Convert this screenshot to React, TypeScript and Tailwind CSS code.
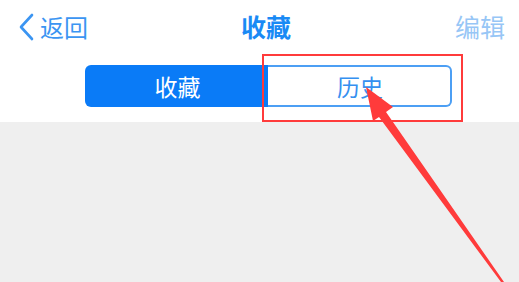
import React from 'react'

const cjk = { fontFamily: '"Noto Sans CJK SC", "Noto Sans", sans-serif' }

function Chevron() {
  return (
    <svg width="16" height="28" viewBox="0 0 16 28" fill="none">
      <path d="M14 2 L3 14 L14 26" stroke="#3b95f2" strokeWidth="2.6" strokeLinecap="round" strokeLinejoin="round" />
    </svg>
  )
}

function Arrow() {
  // tip at (366,88), tail toward (502,282)
  return (
    <svg className="absolute left-0 top-0 pointer-events-none" width="519" height="282" viewBox="0 0 519 282">
      <polygon
        fill="#ff3b3b"
        points="366,87 393,107 386,112 504,282 501,282 379,117 373,121"
      />
    </svg>
  )
}

export default function App() {
  return (
    <div className="relative w-[519px] h-[282px] overflow-hidden bg-[#efefef]" style={cjk}>
      <div className="bg-white h-[122px] flex flex-col">
        <div className="flex items-center h-[52px] pt-[1px]">
          <div className="flex items-center gap-[6px] ml-[18px] text-[#3b95f2] text-[24px] leading-none">
            <Chevron />
            <span>返回</span>
          </div>
          <div className="ml-[153px] text-[25px] font-bold text-[#1a8af5] leading-none">收藏</div>
          <div className="ml-auto mr-[14px] text-[25px] text-[#97c6f6] leading-none">编辑</div>
        </div>
        <div className="flex mt-[13px] ml-[85px] w-[367px] h-[42px]">
          <div className="w-[183px] bg-[#0a7bf7] rounded-l-[6px] flex items-center justify-center text-white text-[23px] pl-[2px]">
            收藏
          </div>
          <div className="flex-1 border-[2px] border-l-0 border-[#4c9ff4] rounded-r-[6px] flex items-center justify-center text-[#3590f0] text-[23px] pl-[2px]">
            历史
          </div>
        </div>
      </div>
      <div className="absolute left-[262px] top-[54px] w-[201px] h-[68px] border-[2px] border-[#ff3b3b]" />
      <Arrow />
    </div>
  )
}
